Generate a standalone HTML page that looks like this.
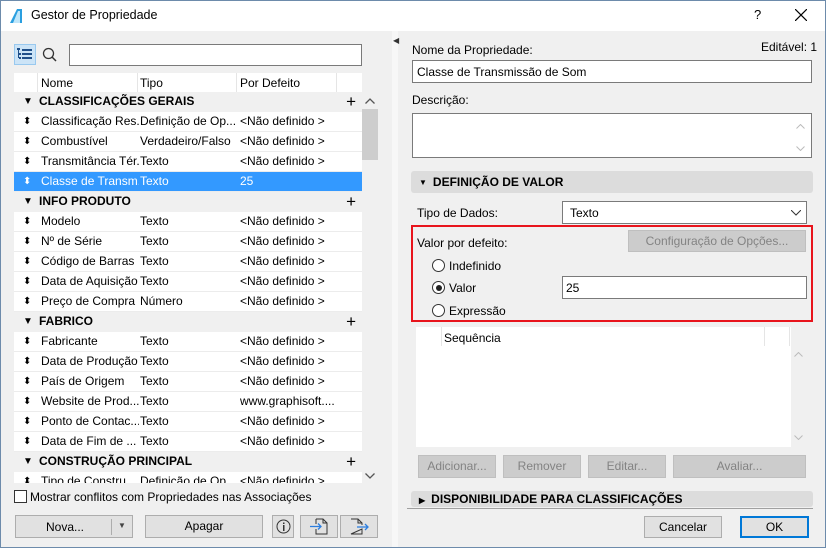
<!DOCTYPE html>
<html><head><meta charset="utf-8"><style>
*{box-sizing:border-box;margin:0;padding:0}
body{width:826px;height:548px;background:#f0f0f0;font-family:"Liberation Sans",sans-serif;font-size:12px;color:#000;position:relative;overflow:hidden}
.a{position:absolute}
.win{left:0;top:0;width:826px;height:548px;border:1px solid #6d8bab}
.inp{position:absolute;background:#fff;border:1px solid #7a7a7a}
.btn{position:absolute;background:#e1e1e1;border:1px solid #adadad;text-align:center;line-height:20px}
.dis{background:#cccccc;border-color:#bfbfbf;color:#838383}
.row{position:absolute;left:14px;width:348px;height:20px;background:#fff;border-bottom:1px solid #ececec;line-height:19px;white-space:nowrap}
.row span{position:absolute;top:0;overflow:hidden}
.cat{background:#f0f0f0;font-weight:bold;border-bottom:none}
.sel{background:#3399ff;color:#fff}
.c0{left:9px;font-size:10px}
.c1{left:27px;width:98px}.c2{left:126px;width:99px}.c3{left:226px}
.plus{position:absolute;right:6px;top:-1px;font-size:17px;font-weight:normal}
.hdr{position:absolute;background:#dcdcdc;border-radius:3px;font-weight:bold;line-height:20px}
.radio{position:absolute;width:13px;height:13px;border:1px solid #333;border-radius:50%;background:#fff}
</style></head><body>
<div class="a win"></div>
<div class="a" style="left:1px;top:1px;width:824px;height:30px;background:#fff"></div>
<svg class="a" style="left:9px;top:8px" width="14" height="16"><path d="M1 15 L8 1 L13 1 L13 15 Z" fill="#2a9fe0"/><path d="M4 15 L9 3 L11 3 L11 15Z" fill="#bfe6fa"/></svg>
<div class="a" style="left:31px;top:8px;font-size:12.5px">Gestor de Propriedade</div>
<div class="a" style="left:754px;top:7px;font-size:13px">?</div>
<svg class="a" style="left:795px;top:9px" width="12" height="12"><path d="M0 0L12 12M12 0L0 12" stroke="#000" stroke-width="1.2"/></svg>

<div class="a" style="left:14px;top:44px;width:22px;height:21px;background:#cce4f7;border:1px solid #99c9ef"></div>
<svg class="a" style="left:17px;top:48px" width="16" height="13"><g fill="#1f4f8a"><rect x="0" y="0" width="3" height="2"/><rect x="5" y="1" width="10" height="2"/><rect x="2" y="5" width="2" height="2"/><rect x="5" y="5" width="10" height="2"/><rect x="2" y="9" width="2" height="2"/><rect x="5" y="9" width="10" height="2"/><rect x="1" y="2" width="1" height="8"/></g></svg>
<svg class="a" style="left:42px;top:47px" width="16" height="16"><circle cx="6.5" cy="6.5" r="5" fill="none" stroke="#333" stroke-width="1.3"/><path d="M10 10L14 14" stroke="#333" stroke-width="1.5"/></svg>
<div class="inp" style="left:69px;top:44px;width:293px;height:22px"></div>

<div class="a" style="left:14px;top:73px;width:348px;height:19px;background:#fff"></div>
<div class="a" style="left:37px;top:73px;width:1px;height:19px;background:#e5e5e5"></div>
<div class="a" style="left:137px;top:73px;width:1px;height:19px;background:#e5e5e5"></div>
<div class="a" style="left:236px;top:73px;width:1px;height:19px;background:#e5e5e5"></div>
<div class="a" style="left:336px;top:73px;width:1px;height:19px;background:#e5e5e5"></div>
<div class="a" style="left:41px;top:76px">Nome</div>
<div class="a" style="left:140px;top:76px">Tipo</div>
<div class="a" style="left:240px;top:76px">Por Defeito</div>

<div class="row cat" style="top:92px"><span class="c0">▼</span><span style="left:25px">CLASSIFICAÇÕES GERAIS</span><span class="plus">+</span></div>
<div class="row" style="top:112px"><span class="c0">⬍</span><span class="c1">Classificação Res...</span><span class="c2">Definição de Op...</span><span class="c3">&lt;Não definido &gt;</span></div>
<div class="row" style="top:132px"><span class="c0">⬍</span><span class="c1">Combustível</span><span class="c2">Verdadeiro/Falso</span><span class="c3">&lt;Não definido &gt;</span></div>
<div class="row" style="top:152px"><span class="c0">⬍</span><span class="c1">Transmitância Tér...</span><span class="c2">Texto</span><span class="c3">&lt;Não definido &gt;</span></div>
<div class="row sel" style="top:172px"><span class="c0">⬍</span><span class="c1">Classe de Transm...</span><span class="c2">Texto</span><span class="c3">25</span></div>
<div class="row cat" style="top:192px"><span class="c0">▼</span><span style="left:25px">INFO PRODUTO</span><span class="plus">+</span></div>
<div class="row" style="top:212px"><span class="c0">⬍</span><span class="c1">Modelo</span><span class="c2">Texto</span><span class="c3">&lt;Não definido &gt;</span></div>
<div class="row" style="top:232px"><span class="c0">⬍</span><span class="c1">Nº de Série</span><span class="c2">Texto</span><span class="c3">&lt;Não definido &gt;</span></div>
<div class="row" style="top:252px"><span class="c0">⬍</span><span class="c1">Código de Barras</span><span class="c2">Texto</span><span class="c3">&lt;Não definido &gt;</span></div>
<div class="row" style="top:272px"><span class="c0">⬍</span><span class="c1">Data de Aquisição</span><span class="c2">Texto</span><span class="c3">&lt;Não definido &gt;</span></div>
<div class="row" style="top:292px"><span class="c0">⬍</span><span class="c1">Preço de Compra</span><span class="c2">Número</span><span class="c3">&lt;Não definido &gt;</span></div>
<div class="row cat" style="top:312px"><span class="c0">▼</span><span style="left:25px">FABRICO</span><span class="plus">+</span></div>
<div class="row" style="top:332px"><span class="c0">⬍</span><span class="c1">Fabricante</span><span class="c2">Texto</span><span class="c3">&lt;Não definido &gt;</span></div>
<div class="row" style="top:352px"><span class="c0">⬍</span><span class="c1">Data de Produção</span><span class="c2">Texto</span><span class="c3">&lt;Não definido &gt;</span></div>
<div class="row" style="top:372px"><span class="c0">⬍</span><span class="c1">País de Origem</span><span class="c2">Texto</span><span class="c3">&lt;Não definido &gt;</span></div>
<div class="row" style="top:392px"><span class="c0">⬍</span><span class="c1">Website de Prod...</span><span class="c2">Texto</span><span class="c3">www.graphisoft....</span></div>
<div class="row" style="top:412px"><span class="c0">⬍</span><span class="c1">Ponto de Contac...</span><span class="c2">Texto</span><span class="c3">&lt;Não definido &gt;</span></div>
<div class="row" style="top:432px"><span class="c0">⬍</span><span class="c1">Data de Fim de ...</span><span class="c2">Texto</span><span class="c3">&lt;Não definido &gt;</span></div>
<div class="row cat" style="top:452px"><span class="c0">▼</span><span style="left:25px">CONSTRUÇÃO PRINCIPAL</span><span class="plus">+</span></div>
<div class="a" style="left:14px;top:472px;width:348px;height:11px;background:#fff;overflow:hidden;line-height:19px;white-space:nowrap"><span class="a" style="left:9px;font-size:10px">⬍</span><span class="a" style="left:27px">Tipo de Constru...</span><span class="a" style="left:126px">Definição de Op...</span><span class="a" style="left:226px">&lt;Não definido &gt;</span></div>
<div class="a" style="left:362px;top:92px;width:16px;height:392px;background:#f0f0f0"></div>
<svg class="a" style="left:365px;top:98px" width="10" height="6"><path d="M0.5 5.5L5 1L9.5 5.5" fill="none" stroke="#555" stroke-width="1.3"/></svg>
<div class="a" style="left:362px;top:109px;width:16px;height:51px;background:#cdcdcd"></div>
<svg class="a" style="left:365px;top:473px" width="10" height="6"><path d="M0.5 0.5L5 5L9.5 0.5" fill="none" stroke="#555" stroke-width="1.3"/></svg>

<div class="a" style="left:14px;top:490px;width:13px;height:13px;border:1px solid #333;background:#fff"></div>
<div class="a" style="left:30px;top:490px">Mostrar conflitos com Propriedades nas Associações</div>
<div class="btn" style="left:15px;top:515px;width:118px;height:23px"><span class="a" style="left:30px;top:1px">Nova...</span><span class="a" style="left:95px;top:3px;width:1px;height:16px;background:#adadad"></span><span class="a" style="left:102px;top:0;font-size:8px;color:#444">▼</span></div>
<div class="btn" style="left:145px;top:515px;width:118px;height:23px">Apagar</div>
<div class="btn" style="left:272px;top:515px;width:22px;height:23px"><svg style="margin-top:3px" width="15" height="15"><circle cx="7.5" cy="7.5" r="6.5" fill="none" stroke="#333"/><rect x="7" y="6" width="1.5" height="6" fill="#333"/><rect x="7" y="3.5" width="1.5" height="1.5" fill="#333"/></svg></div>
<div class="btn" style="left:300px;top:515px;width:38px;height:23px"><svg style="margin-top:2px" width="20" height="17"><path d="M7 1H14L18 5V16H7V11M7 6V1" fill="none" stroke="#333"/><path d="M14 1V5H18" fill="none" stroke="#333"/><path d="M1 8.5H12M9 5.5L12 8.5L9 11.5" fill="none" stroke="#2b7ee0" stroke-width="1.3"/></svg></div>
<div class="btn" style="left:340px;top:515px;width:38px;height:23px"><svg style="margin-top:2px" width="20" height="17"><path d="M2 1H9L13 5V7M13 11V16H2Z" fill="none" stroke="#333"/><path d="M9 1V5H13" fill="none" stroke="#333"/><path d="M8 9H19M16 6L19 9L16 12" fill="none" stroke="#2b7ee0" stroke-width="1.3"/></svg></div>

<div class="a" style="left:392px;top:31px;width:6px;height:516px;background:#f7f7f7"></div>
<div class="a" style="left:393px;top:36px;font-size:8px;color:#333">◀</div>

<div class="a" style="left:412px;top:43px">Nome da Propriedade:</div>
<div class="a" style="left:761px;top:40px">Editável: 1</div>
<div class="inp" style="left:412px;top:60px;width:400px;height:23px;padding:4px 4px">Classe de Transmissão de Som</div>
<div class="a" style="left:412px;top:93px">Descrição:</div>
<div class="inp" style="left:412px;top:113px;width:400px;height:45px"></div>
<svg class="a" style="left:796px;top:124px" width="9" height="5"><path d="M0.5 4.5L4.5 0.5L8.5 4.5" fill="none" stroke="#bbb"/></svg>
<svg class="a" style="left:796px;top:146px" width="9" height="5"><path d="M0.5 0.5L4.5 4.5L8.5 0.5" fill="none" stroke="#bbb"/></svg>

<div class="hdr" style="left:411px;top:171px;width:402px;height:22px;line-height:22px"><span style="font-size:8px;margin:0 6px 0 8px;position:relative;top:-1px">▼</span>DEFINIÇÃO DE VALOR</div>
<div class="a" style="left:417px;top:206px">Tipo de Dados:</div>
<div class="inp" style="left:562px;top:201px;width:245px;height:23px;padding:4px 7px">Texto<svg class="a" style="right:5px;top:8px" width="10" height="6"><path d="M0 0L5 5L10 0" fill="none" stroke="#333"/></svg></div>
<div class="a" style="left:411px;top:225px;width:402px;height:97px;border:2px solid #e8141c"></div>
<div class="a" style="left:417px;top:236px">Valor por defeito:</div>
<div class="btn dis" style="left:628px;top:230px;width:178px;height:22px">Configuração de Opções...</div>
<div class="radio" style="left:432px;top:259px"></div><div class="a" style="left:449px;top:259px">Indefinido</div>
<div class="radio" style="left:432px;top:281px"><div class="a" style="left:2.5px;top:2.5px;width:6px;height:6px;border-radius:50%;background:#222"></div></div><div class="a" style="left:449px;top:281px">Valor</div>
<div class="inp" style="left:562px;top:276px;width:245px;height:23px;padding:4px 3px">25</div>
<div class="radio" style="left:432px;top:304px"></div><div class="a" style="left:449px;top:304px">Expressão</div>

<div class="a" style="left:416px;top:327px;width:375px;height:120px;background:#fff"></div>
<div class="a" style="left:441px;top:327px;width:1px;height:19px;background:#e5e5e5"></div>
<div class="a" style="left:764px;top:327px;width:1px;height:19px;background:#e5e5e5"></div>
<div class="a" style="left:789px;top:327px;width:1px;height:19px;background:#e5e5e5"></div>
<div class="a" style="left:444px;top:331px">Sequência</div>
<svg class="a" style="left:794px;top:352px" width="9" height="5"><path d="M0.5 4.5L4.5 0.5L8.5 4.5" fill="none" stroke="#bbb"/></svg>
<svg class="a" style="left:794px;top:435px" width="9" height="5"><path d="M0.5 0.5L4.5 4.5L8.5 0.5" fill="none" stroke="#bbb"/></svg>

<div class="btn dis" style="left:418px;top:455px;width:78px;height:23px">Adicionar...</div>
<div class="btn dis" style="left:503px;top:455px;width:78px;height:23px">Remover</div>
<div class="btn dis" style="left:588px;top:455px;width:78px;height:23px">Editar...</div>
<div class="btn dis" style="left:673px;top:455px;width:133px;height:23px">Avaliar...</div>

<div class="hdr" style="left:411px;top:491px;width:402px;height:16px;line-height:16px"><span style="font-size:8px;margin:0 6px 0 8px">▶</span>DISPONIBILIDADE PARA CLASSIFICAÇÕES</div>
<div class="a" style="left:407px;top:508px;width:406px;height:1px;background:#a0a0a0"></div>
<div class="btn" style="left:644px;top:516px;width:78px;height:22px">Cancelar</div>
<div class="btn" style="left:740px;top:516px;width:69px;height:22px;border:2px solid #0078d7;line-height:18px">OK</div>
</body></html>
